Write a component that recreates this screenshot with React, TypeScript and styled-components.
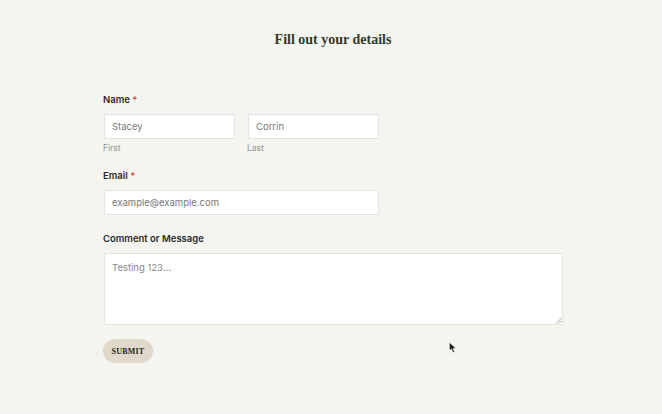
import styled, { createGlobalStyle } from 'styled-components';

const GlobalStyle = createGlobalStyle`
  html, body {
    margin: 0;
    padding: 0;
    background: #f5f5f0;
  }
  * {
    box-sizing: border-box;
  }
`;

const Page = styled.div`
  position: relative;
  width: 662px;
  height: 414px;
  overflow: hidden;
  padding: 32px 99px 0 103px;
  background-color: #f5f5f0;
  background-image:
    radial-gradient(circle at 23px 41px, #fbfbf8 0.8px, transparent 1.2px),
    radial-gradient(circle at 97px 13px, #ebebe5 0.6px, transparent 1px),
    radial-gradient(circle at 141px 88px, #fbfbf8 0.8px, transparent 1.2px),
    radial-gradient(circle at 62px 127px, #ebebe5 0.6px, transparent 1px),
    radial-gradient(circle at 173px 151px, #fbfbf8 0.7px, transparent 1.1px);
  background-size: 190px 170px;
  font-family: Inter, "Liberation Sans", sans-serif;
`;
const Title = styled.h1`
  margin: 0 0 46px;
  height: 16px;
  font-family: "Liberation Serif", serif;
  font-size: 14px;
  line-height: 16px;
  font-weight: 700;
  text-align: center;
  color: #2f3a30;
`;
const Form = styled.form`
  display: flex;
  flex-direction: column;
  align-items: flex-start;
`;
const Field = styled.div<{ $gap: number }>`
  margin-bottom: ${(props) => props.$gap}px;
`;
const Label = styled.div`
  font-size: 9.5px;
  line-height: 12px;
  font-weight: 600;
  color: #2a2a2a;
  margin-bottom: 8px;
`;
const Required = styled.span`
  color: #d9444c;
`;
const NameRow = styled.div`
  display: flex;
  gap: 12px;
`;
const NamePart = styled.div`
  display: flex;
  flex-direction: column;
`;
const Input = styled.div<{ $width: number }>`
  width: ${(props) => props.$width}px;
  height: 25px;
  padding: 0 7px;
  margin-left: 1px;
  display: flex;
  align-items: center;
  background: #fff;
  border: 1px solid #e4e4e0;
  font-size: 9.5px;
  color: #777;
`;
const Hint = styled.div`
  margin-top: 4px;
  font-size: 8.5px;
  line-height: 10px;
  color: #94948f;
`;
const TextBox = styled.div`
  position: relative;
  width: 459px;
  height: 72px;
  margin-left: 1px;
  padding: 8px 7px;
  background: #fff;
  border: 1px solid #e4e4e0;
  font-size: 9.5px;
  line-height: 12px;
  color: #888;
`;
const Grip = styled.svg`
  position: absolute;
  right: 0;
  bottom: 0;
`;
const SubmitButton = styled.button`
  width: 50px;
  height: 24px;
  padding: 0;
  border: none;
  border-radius: 12px;
  background: #e0d8c8;
  font-family: "Liberation Serif", serif;
  font-size: 8px;
  font-weight: 700;
  letter-spacing: 0.2px;
  color: #23291f;
`;
const Cursor = styled.svg`
  position: absolute;
  left: 449px;
  top: 342px;
`;

export default function App() {
  return (
    <>
      <GlobalStyle />
      <Page>
        <Title>Fill out your details</Title>
        <Form>
          <Field $gap={17}>
            <Label>
              Name <Required>*</Required>
            </Label>
            <NameRow>
              <NamePart>
                <Input $width={131}>Stacey</Input>
                <Hint>First</Hint>
              </NamePart>
              <NamePart>
                <Input $width={131}>Corrin</Input>
                <Hint>Last</Hint>
              </NamePart>
            </NameRow>
          </Field>
          <Field $gap={18}>
            <Label>
              Email <Required>*</Required>
            </Label>
            <Input $width={275}>example@example.com</Input>
          </Field>
          <Field $gap={14}>
            <Label>Comment or Message</Label>
            <TextBox>
              Testing 123...
              <Grip width="7" height="7" viewBox="0 0 7 7">
                <path d="M1 6.5 L6.5 1 M4 6.5 L6.5 4" stroke="#8f8f8f" strokeWidth="0.8" fill="none" />
              </Grip>
            </TextBox>
          </Field>
          <SubmitButton type="button">SUBMIT</SubmitButton>
        </Form>
        <Cursor width="8" height="12" viewBox="0 0 8 12">
          <path d="M0.5 0.5 L0.5 8.5 L2.4 6.8 L4 10.6 L5.4 10 L3.9 6.4 L6.6 6.2 Z" fill="#1a1a1a" stroke="#fff" strokeWidth="0.4" />
        </Cursor>
      </Page>
    </>
  );
}
